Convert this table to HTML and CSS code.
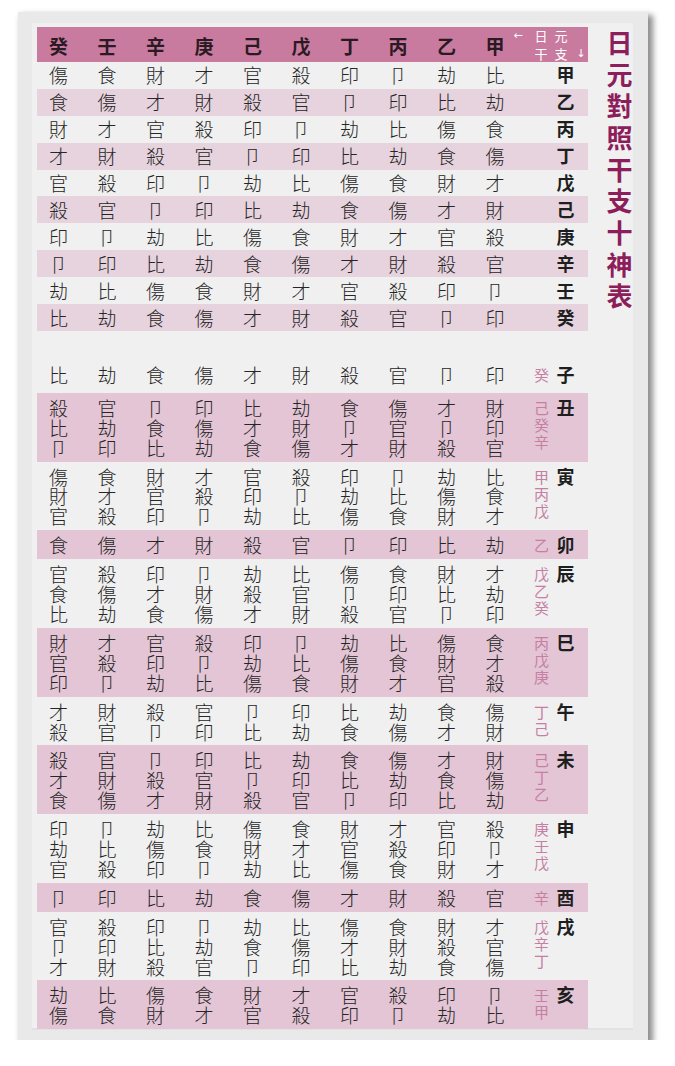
FILE: index.html
```html
<!DOCTYPE html>
<html lang="zh-Hant">
<head>
<meta charset="utf-8">
<title>日元對照干支十神表</title>
<link rel="stylesheet" href="styles.css">
</head>
<body>
<div class="card">
  <div class="panel">
    <div class="table">
      <div class="hdr">
        <div class="c">癸</div><div class="c">壬</div><div class="c">辛</div><div class="c">庚</div><div class="c">己</div><div class="c">戊</div><div class="c">丁</div><div class="c">丙</div><div class="c">乙</div><div class="c">甲</div>
        <div class="legend">
          <span class="ar">←</span><span>日</span><span>元</span><span></span>
          <span></span><span>干</span><span>支</span><span class="ar dn">↓</span>
        </div>
      </div>

      <div class="upper">
        <div class="row up"><div class="c">傷</div><div class="c">食</div><div class="c">財</div><div class="c">才</div><div class="c">官</div><div class="c">殺</div><div class="c">印</div><div class="c">卩</div><div class="c">劫</div><div class="c">比</div><div class="s"></div><div class="b">甲</div></div>
        <div class="row up pk1"><div class="c">食</div><div class="c">傷</div><div class="c">才</div><div class="c">財</div><div class="c">殺</div><div class="c">官</div><div class="c">卩</div><div class="c">印</div><div class="c">比</div><div class="c">劫</div><div class="s"></div><div class="b">乙</div></div>
        <div class="row up"><div class="c">財</div><div class="c">才</div><div class="c">官</div><div class="c">殺</div><div class="c">印</div><div class="c">卩</div><div class="c">劫</div><div class="c">比</div><div class="c">傷</div><div class="c">食</div><div class="s"></div><div class="b">丙</div></div>
        <div class="row up pk1"><div class="c">才</div><div class="c">財</div><div class="c">殺</div><div class="c">官</div><div class="c">卩</div><div class="c">印</div><div class="c">比</div><div class="c">劫</div><div class="c">食</div><div class="c">傷</div><div class="s"></div><div class="b">丁</div></div>
        <div class="row up"><div class="c">官</div><div class="c">殺</div><div class="c">印</div><div class="c">卩</div><div class="c">劫</div><div class="c">比</div><div class="c">傷</div><div class="c">食</div><div class="c">財</div><div class="c">才</div><div class="s"></div><div class="b">戊</div></div>
        <div class="row up pk1"><div class="c">殺</div><div class="c">官</div><div class="c">卩</div><div class="c">印</div><div class="c">比</div><div class="c">劫</div><div class="c">食</div><div class="c">傷</div><div class="c">才</div><div class="c">財</div><div class="s"></div><div class="b">己</div></div>
        <div class="row up"><div class="c">印</div><div class="c">卩</div><div class="c">劫</div><div class="c">比</div><div class="c">傷</div><div class="c">食</div><div class="c">財</div><div class="c">才</div><div class="c">官</div><div class="c">殺</div><div class="s"></div><div class="b">庚</div></div>
        <div class="row up pk1"><div class="c">卩</div><div class="c">印</div><div class="c">比</div><div class="c">劫</div><div class="c">食</div><div class="c">傷</div><div class="c">才</div><div class="c">財</div><div class="c">殺</div><div class="c">官</div><div class="s"></div><div class="b">辛</div></div>
        <div class="row up"><div class="c">劫</div><div class="c">比</div><div class="c">傷</div><div class="c">食</div><div class="c">財</div><div class="c">才</div><div class="c">官</div><div class="c">殺</div><div class="c">印</div><div class="c">卩</div><div class="s"></div><div class="b">壬</div></div>
        <div class="row up pk1"><div class="c">比</div><div class="c">劫</div><div class="c">食</div><div class="c">傷</div><div class="c">才</div><div class="c">財</div><div class="c">殺</div><div class="c">官</div><div class="c">卩</div><div class="c">印</div><div class="s"></div><div class="b">癸</div></div>
      </div>

      <div class="lower">
        <div class="row lo one"><div class="c">比</div><div class="c">劫</div><div class="c">食</div><div class="c">傷</div><div class="c">才</div><div class="c">財</div><div class="c">殺</div><div class="c">官</div><div class="c">卩</div><div class="c">印</div><div class="s">癸</div><div class="b">子</div></div>
        <div class="row lo pk2"><div class="c">殺比卩</div><div class="c">官劫印</div><div class="c">卩食比</div><div class="c">印傷劫</div><div class="c">比才食</div><div class="c">劫財傷</div><div class="c">食卩才</div><div class="c">傷官財</div><div class="c">才卩殺</div><div class="c">財印官</div><div class="s">己癸辛</div><div class="b">丑</div></div>
        <div class="row lo"><div class="c">傷財官</div><div class="c">食才殺</div><div class="c">財官印</div><div class="c">才殺卩</div><div class="c">官印劫</div><div class="c">殺卩比</div><div class="c">印劫傷</div><div class="c">卩比食</div><div class="c">劫傷財</div><div class="c">比食才</div><div class="s">甲丙戊</div><div class="b">寅</div></div>
        <div class="row lo pk2"><div class="c">食</div><div class="c">傷</div><div class="c">才</div><div class="c">財</div><div class="c">殺</div><div class="c">官</div><div class="c">卩</div><div class="c">印</div><div class="c">比</div><div class="c">劫</div><div class="s">乙</div><div class="b">卯</div></div>
        <div class="row lo"><div class="c">官食比</div><div class="c">殺傷劫</div><div class="c">印才食</div><div class="c">卩財傷</div><div class="c">劫殺才</div><div class="c">比官財</div><div class="c">傷卩殺</div><div class="c">食印官</div><div class="c">財比卩</div><div class="c">才劫印</div><div class="s">戊乙癸</div><div class="b">辰</div></div>
        <div class="row lo pk2"><div class="c">財官印</div><div class="c">才殺卩</div><div class="c">官印劫</div><div class="c">殺卩比</div><div class="c">印劫傷</div><div class="c">卩比食</div><div class="c">劫傷財</div><div class="c">比食才</div><div class="c">傷財官</div><div class="c">食才殺</div><div class="s">丙戊庚</div><div class="b">巳</div></div>
        <div class="row lo"><div class="c">才殺</div><div class="c">財官</div><div class="c">殺卩</div><div class="c">官印</div><div class="c">卩比</div><div class="c">印劫</div><div class="c">比食</div><div class="c">劫傷</div><div class="c">食才</div><div class="c">傷財</div><div class="s">丁己</div><div class="b">午</div></div>
        <div class="row lo pk2"><div class="c">殺才食</div><div class="c">官財傷</div><div class="c">卩殺才</div><div class="c">印官財</div><div class="c">比卩殺</div><div class="c">劫印官</div><div class="c">食比卩</div><div class="c">傷劫印</div><div class="c">才食比</div><div class="c">財傷劫</div><div class="s">己丁乙</div><div class="b">未</div></div>
        <div class="row lo"><div class="c">印劫官</div><div class="c">卩比殺</div><div class="c">劫傷印</div><div class="c">比食卩</div><div class="c">傷財劫</div><div class="c">食才比</div><div class="c">財官傷</div><div class="c">才殺食</div><div class="c">官印財</div><div class="c">殺卩才</div><div class="s">庚壬戊</div><div class="b">申</div></div>
        <div class="row lo pk2"><div class="c">卩</div><div class="c">印</div><div class="c">比</div><div class="c">劫</div><div class="c">食</div><div class="c">傷</div><div class="c">才</div><div class="c">財</div><div class="c">殺</div><div class="c">官</div><div class="s">辛</div><div class="b">酉</div></div>
        <div class="row lo"><div class="c">官卩才</div><div class="c">殺印財</div><div class="c">印比殺</div><div class="c">卩劫官</div><div class="c">劫食卩</div><div class="c">比傷印</div><div class="c">傷才比</div><div class="c">食財劫</div><div class="c">財殺食</div><div class="c">才官傷</div><div class="s">戊辛丁</div><div class="b">戌</div></div>
        <div class="row lo pk2"><div class="c">劫傷</div><div class="c">比食</div><div class="c">傷財</div><div class="c">食才</div><div class="c">財官</div><div class="c">才殺</div><div class="c">官印</div><div class="c">殺卩</div><div class="c">印劫</div><div class="c">卩比</div><div class="s">壬甲</div><div class="b">亥</div></div>
      </div>
    </div>
    <h1 class="title">日元對照干支十神表</h1>
  </div>
</div>
</body>
</html>
```

FILE: styles.css
```css
* { box-sizing: border-box; }

body {
  margin: 0;
  background: #ffffff;
  font-family: "Noto Sans CJK TC", "Noto Sans CJK JP", sans-serif;
}

.card {
  margin: 12px 0 0 18px;
  width: 630px;
  height: 1028px;
  background: #e9e9e9;
  padding: 11px 15px 10px 14px;
  box-shadow: 4px 4px 6px 1px rgba(0, 0, 0, 0.45);
}

.panel {
  height: 100%;
  background: #f0f0f0;
  display: flex;
  align-items: flex-start;
  padding: 4px 0 0 5px;
  border-bottom: 2px solid #e2e2e2;
}

.table {
  width: 551px;
  flex: none;
}

.title {
  margin: 3px 0 0 18px;
  writing-mode: vertical-rl;
  font-size: 26px;
  line-height: 26px;
  font-weight: 700;
  letter-spacing: 5.7px;
  color: #8c1f5b;
}

/* header band */
.hdr {
  height: 35px;
  background: #c87b9e;
  display: grid;
  grid-template-columns: repeat(9, 48.5px) 28px 74px;
  padding-left: 12px;
  align-items: center;
}

.hdr .c {
  font-size: 19px;
  font-weight: 700;
  color: #2b1a24;
}

.legend {
  display: grid;
  grid-template-columns: 21px 20px 20px 13px;
  grid-template-rows: 18px 18px;
  font-size: 13px;
  line-height: 18px;
  color: #ffffff;
}

.legend .ar {
  font-family: "DejaVu Sans", sans-serif;
  font-size: 11px;
}

.legend .dn {
  text-align: center;
}

/* table rows */
.row {
  display: grid;
  grid-template-columns: repeat(10, 48.5px) 19px 25px;
  padding-left: 12px;
}

.row .c {
  font-size: 19px;
  line-height: 19.9px;
  font-weight: 300;
  color: #262626;
}

.up {
  height: 26.9px;
  align-items: center;
}

.lower {
  margin-top: 31px;
}

.lo {
  padding: 5px 0 4px 12px;
  align-items: start;
}

.lo.one {
  padding: 3px 0 8px 12px;
}

.lo .c {
  width: 1em;
}

.s {
  width: 1em;
  margin-top: 1px;
  font-size: 15px;
  line-height: 17px;
  color: #c67fa3;
}

.b {
  font-size: 18px;
  line-height: 19.9px;
  font-weight: 700;
  text-align: center;
  color: #1e1e1e;
}

.pk1 { background: #e7d3de; }
.pk2 { background: #e3c5d5; }
```
